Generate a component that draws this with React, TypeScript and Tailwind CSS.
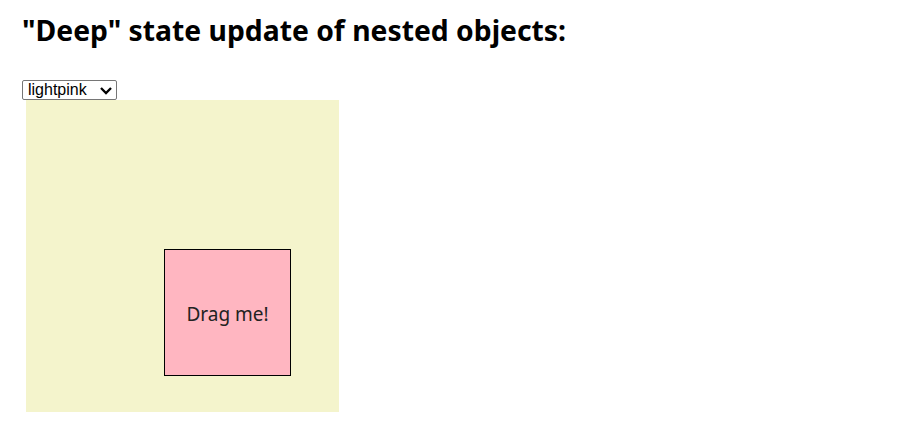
import React from "react";

export default function App() {
  return (
    <div className="bg-white w-[924px] h-[434px] pl-[22px] pt-[12px]" style={{ fontFamily: '"Noto Sans", sans-serif' }}>
      <h1 className="text-[28.3px] leading-[36px] font-bold text-black m-0">"Deep" state update of nested objects:</h1>
      <div className="h-[32px]" />
      <div className="relative w-[95px] h-[20px]">
        <select
          className="appearance-none block h-[20px] w-[95px] border border-[#767676] rounded-[2px] bg-white text-[16px] leading-[18px] text-black pl-[5px] pr-[20px] py-0"
          style={{ fontFamily: '"Liberation Sans", Arial, sans-serif' }}
          defaultValue="lightpink"
        >
          <option value="lightpink">lightpink</option>
          <option value="aliceblue">aliceblue</option>
        </select>
        <svg className="absolute left-[77px] top-[6px] pointer-events-none" width="14" height="9" viewBox="0 0 14 9">
          <path d="M2 2 L7 7 L12 2" fill="none" stroke="#000" strokeWidth="2.3" />
        </svg>
      </div>
      <div className="relative ml-[4px] w-[313px] h-[312px] bg-[#f4f4cc]">
        <div className="absolute left-[138px] top-[149px] w-[127px] h-[127px] border border-black bg-[#ffb6c1] flex items-center justify-center pt-[3px] text-[19px] text-[#222]">
          Drag me!
        </div>
      </div>
    </div>
  );
}
